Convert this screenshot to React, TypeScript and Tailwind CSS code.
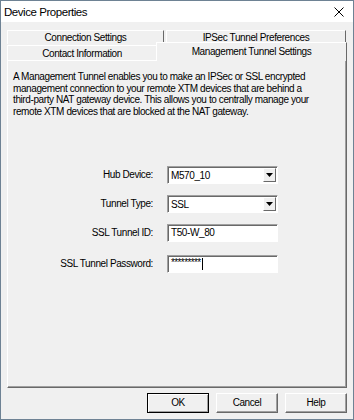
import React from 'react';

const raised = 'border border-t-white border-l-white border-b-[#696969] border-r-[#696969]';

const ComboBox = ({ value }: { value: string }) => (
  <div className="h-[18px] flex bg-white border border-[#a0a0a0] border-b-white border-r-white shadow-[inset_1px_1px_0_#696969]">
    <span className="flex-1 pl-[3px] pt-[3px] leading-[12px]">{value}</span>
    <div className={`w-[13px] my-px mr-px bg-[#f0f0f0] flex items-center justify-center ${raised}`}>
      <svg width="7" height="4" viewBox="0 0 7 4">
        <polygon points="0,0 7,0 3.5,4" fill="#000" />
      </svg>
    </div>
  </div>
);

const TextBox = ({ children, className = '' }: { children: React.ReactNode; className?: string }) => (
  <div className={`h-[18px] flex items-center bg-white border border-[#a0a0a0] border-b-white border-r-white shadow-[inset_1px_1px_0_#696969] pl-[3px] ${className}`}>
    {children}
  </div>
);

const DialogButton = ({ label, isDefault }: { label: string; isDefault?: boolean }) => (
  <button
    className={
      isDefault
        ? 'w-[62px] h-[20px] bg-[#f0f0f0] border border-black shadow-[inset_1px_1px_0_#fff,inset_-1px_-1px_0_#a0a0a0] leading-[12px]'
        : 'w-[62px] h-[20px] bg-[#f0f0f0] border border-t-white border-l-white border-b-[#696969] border-r-[#696969] shadow-[inset_-1px_-1px_0_#a0a0a0] leading-[12px]'
    }
  >
    {label}
  </button>
);

export default function App() {
  return (
    <div className="w-[354px] h-[420px] flex flex-col bg-[#f0f0f0] border border-[#6e8294] text-black text-[10px] tracking-[-0.4px] font-['Liberation_Sans',Arial,sans-serif]">
      {/* title bar */}
      <div className="h-[21px] bg-white flex items-center justify-between pl-[3px] pr-[9px]">
        <span className="text-[11.5px] tracking-[-0.45px] leading-[14px]">Device Properties</span>
        <svg width="10" height="10" viewBox="0 0 10 10">
          <path d="M0.5 0.5 L9.5 9.5 M9.5 0.5 L0.5 9.5" stroke="#000" strokeWidth="1" />
        </svg>
      </div>

      <div className="flex-1 flex flex-col px-[6px] pt-[8px] pb-[6px]">
        {/* back row of tabs */}
        <div className="flex h-[14px]">
          <div className="w-[157px] flex items-center justify-center border-t border-l border-white border-r border-r-[#696969] leading-[12px] pt-px">
            Connection Settings
          </div>
          <div className="w-[180px] ml-[2px] flex items-center justify-center border-t border-l border-white border-r border-r-[#696969] leading-[12px] pt-px">
            IPSec Tunnel Preferences
          </div>
        </div>

        {/* front row of tabs */}
        <div className="flex items-end h-[17px] -mb-px">
          <div className="w-[149px] h-[16px] flex justify-center border-t border-l border-white leading-[12px] pt-[2px]">
            Contact Information
          </div>
          <div className="relative z-10 w-[191px] h-[19px] bg-[#f0f0f0] flex justify-center border-t border-l border-white border-r border-r-[#696969] leading-[12px] pt-[3px]">
            Management Tunnel Settings
          </div>
        </div>

        {/* tab panel */}
        <div className="h-[328px] border border-t-white border-l-white border-b-[#696969] border-r-[#696969] shadow-[inset_-1px_-1px_0_#a0a0a0]">
          <p className="pl-[5px] pt-[10px] leading-[11.7px] whitespace-nowrap">
            A Management Tunnel enables you to make an IPSec or SSL encrypted
            <br />
            management connection to your remote XTM devices that are behind a
            <br />
            third-party NAT gateway device. This allows you to centrally manage your
            <br />
            remote XTM devices that are blocked at the NAT gateway.
          </p>

          <div className="grid grid-cols-[145px_111px] gap-x-[14px] gap-y-[11px] items-center mt-[48px]">
            <span className="text-right">Hub Device:</span>
            <ComboBox value="M570_10" />

            <span className="text-right">Tunnel Type:</span>
            <ComboBox value="SSL" />

            <span className="text-right">SSL Tunnel ID:</span>
            <TextBox>T50-W_80</TextBox>

            <span className="text-right mt-[2px]">SSL Tunnel Password:</span>
            <TextBox className="mt-[2px]">
              <span className="leading-[10px] -mt-[2px] tracking-[-0.6px]">*********</span>
              <span className="w-px h-[12px] bg-black ml-px" />
            </TextBox>
          </div>
        </div>

        {/* dialog buttons */}
        <div className="flex justify-end gap-[7px] mt-[5px]">
          <DialogButton label="OK" isDefault />
          <DialogButton label="Cancel" />
          <DialogButton label="Help" />
        </div>
      </div>
    </div>
  );
}
